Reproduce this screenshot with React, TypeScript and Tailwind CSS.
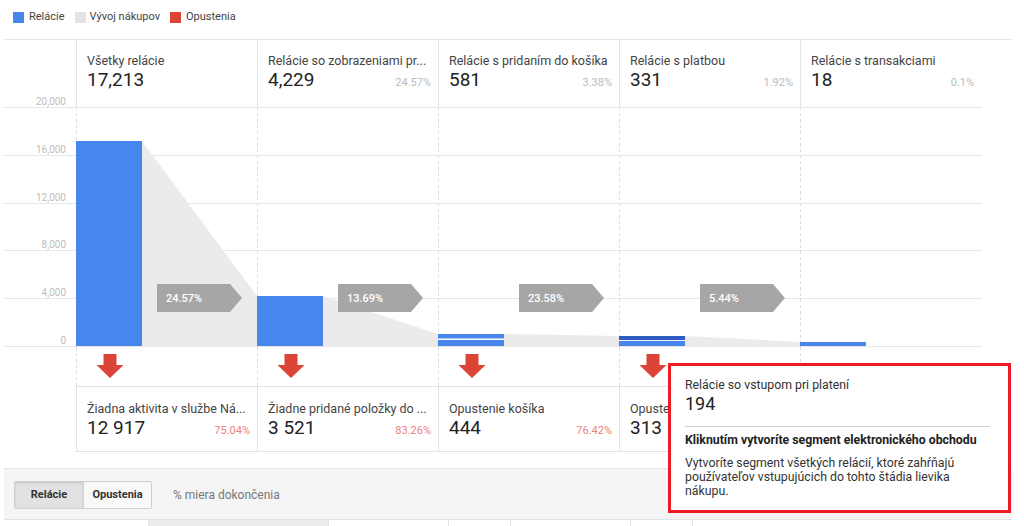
import React from "react";

const BLUE = "#4786ec";
const DARK_BLUE = "#2c5bc2";
const FUNNEL = "#ebebeb";
const TAG = "#a6a6a6";
const RED = "#db4437";

const COL = 181;
const AXIS = 72;
const ZERO = 239;

interface Stage {
  label: string;
  value: string;
  pct?: string;
}

const stages: Stage[] = [
  { label: "Všetky relácie", value: "17,213" },
  { label: "Relácie so zobrazeniami pr...", value: "4,229", pct: "24.57%" },
  { label: "Relácie s pridaním do košíka", value: "581", pct: "3.38%" },
  { label: "Relácie s platbou", value: "331", pct: "1.92%" },
  { label: "Relácie s transakciami", value: "18", pct: "0.1%" },
];

const drops = [
  { label: "Žiadna aktivita v službe Ná...", value: "12 917", pct: "75.04%" },
  { label: "Žiadne pridané položky do ...", value: "3 521", pct: "83.26%" },
  { label: "Opustenie košíka", value: "444", pct: "76.42%" },
  { label: "Opustenie platby", value: "313", pct: "" },
];

// bar segments in svg coords (top, height, colour)
const bars = [
  [{ y: 34, h: 205, c: BLUE }],
  [{ y: 189, h: 50, c: BLUE }],
  [
    { y: 227, h: 4.5, c: BLUE },
    { y: 233, h: 6, c: BLUE },
  ],
  [
    { y: 229, h: 4, c: DARK_BLUE },
    { y: 234, h: 5, c: BLUE },
  ],
  [{ y: 235, h: 4, c: BLUE }],
];

const tops = [34, 189, 227, 229, 235];
const rates = ["24.57%", "13.69%", "23.58%", "5.44%"];
const grid = [
  { y: 0.5, label: "20,000" },
  { y: 48.5, label: "16,000" },
  { y: 96.5, label: "12,000" },
  { y: 143.5, label: "8,000" },
  { y: 191.5, label: "4,000" },
  { y: 239.5, label: "0" },
];

const FunnelChart: React.FC = () => (
  <svg width={978} height={279} className="block overflow-visible">
    {[0, 1, 2, 3, 4].map((i) => (
      <line
        key={i}
        x1={AXIS + i * COL + 0.5}
        x2={AXIS + i * COL + 0.5}
        y1={0}
        y2={279}
        stroke="#dcdcdc"
        strokeDasharray="3 3"
      />
    ))}
    {grid.map((g) => (
      <g key={g.label}>
        <line x1={0} x2={978} y1={g.y} y2={g.y} stroke="#e6e6e6" />
        <text
          x={62}
          y={g.y - 3}
          textAnchor="end"
          fontSize={10}
          fill="#bdbdbd"
          fontFamily="Roboto, sans-serif"
        >
          {g.label}
        </text>
      </g>
    ))}
    {[0, 1, 2, 3].map((i) => {
      const x1 = AXIS + i * COL + 66;
      const x2 = AXIS + (i + 1) * COL;
      return (
        <polygon
          key={i}
          points={`${x1},${tops[i]} ${x2},${tops[i + 1]} ${x2},${ZERO} ${x1},${ZERO}`}
          fill={FUNNEL}
        />
      );
    })}
    {bars.map((segs, i) =>
      segs.map((s, j) => (
        <rect key={`${i}-${j}`} x={AXIS + i * COL} y={s.y} width={66} height={s.h} fill={s.c} />
      )),
    )}
    {rates.map((r, i) => {
      const x = AXIS + i * COL + 81;
      return (
        <g key={r}>
          <polygon
            points={`${x},177 ${x + 73},177 ${x + 85},191 ${x + 73},205 ${x},205`}
            fill={TAG}
          />
          <text
            x={x + 9}
            y={195}
            fontSize={11}
            fontWeight={500}
            fill="#fff"
            fontFamily="Roboto, sans-serif"
          >
            {r}
          </text>
        </g>
      );
    })}
    {[0, 1, 2, 3].map((i) => {
      const cx = AXIS + i * COL + 34;
      return (
        <polygon
          key={i}
          points={`${cx - 6.5},247 ${cx + 6.5},247 ${cx + 6.5},258 ${cx + 13.5},258 ${cx},271 ${cx - 13.5},258 ${cx - 6.5},258`}
          fill={RED}
        />
      );
    })}
  </svg>
);

export default function App() {
  return (
    <div
      className="relative w-[1024px] h-[526px] overflow-hidden bg-white text-[#333]"
      style={{ fontFamily: "Roboto, 'Liberation Sans', sans-serif" }}
    >
      {/* legend */}
      <div className="flex items-center h-[39px] pb-[5px] pl-[13px] text-[11px] text-[#444]">
        <span className="w-[11px] h-[11px] bg-[#4786ec] mr-[5px]" />
        <span className="mr-[10px]">Relácie</span>
        <span className="w-[11px] h-[11px] bg-[#e3e3e3] mr-[4px]" />
        <span className="mr-[10px]">Vývoj nákupov</span>
        <span className="w-[11px] h-[11px] bg-[#db4437] mr-[5px]" />
        <span>Opustenia</span>
      </div>

      <div className="ml-[4px] w-[1008px] border-t border-[#e6e6e6]">
        {/* stage headers */}
        <div className="grid grid-cols-[72px_repeat(5,181px)] h-[67px]">
          <div />
          {stages.map((s) => (
            <div key={s.label} className="border-l border-[#e6e6e6] pl-[10px] pr-[7px] pt-[13px]">
              <div className="text-[12.5px] leading-[16px] text-[#444] whitespace-nowrap">{s.label}</div>
              <div className="flex items-baseline justify-between">
                <span className="text-[19px] leading-[22px] text-[#222]">{s.value}</span>
                {s.pct && <span className="text-[11px] text-[#bbb]">{s.pct}</span>}
              </div>
            </div>
          ))}
        </div>

        <FunnelChart />

        {/* drop-off boxes */}
        <div className="grid grid-cols-[72px_repeat(4,181px)] h-[66px]">
          <div />
          {drops.map((d, i) => (
            <div
              key={d.label}
              className={`border-l border-t border-b border-[#e3e3e3] pl-[10px] pr-[7px] pt-[14px] ${
                i === 3 ? "border-r" : ""
              }`}
            >
              <div className="text-[12.5px] leading-[16px] text-[#444] whitespace-nowrap">{d.label}</div>
              <div className="flex items-baseline justify-between">
                <span className="text-[19px] leading-[22px] text-[#222]">{d.value}</span>
                <span className="text-[11px] text-[#e8837b]">{d.pct}</span>
              </div>
            </div>
          ))}
        </div>

        <div className="h-[16px]" />

        {/* bottom toolbar */}
        <div className="border-t border-[#e6e6e6] bg-[#f5f5f5] h-[51px] flex items-start pt-[12px] pl-[10px]">
          <div className="flex h-[28px] border border-[#d0d0d0] rounded-[2px] text-[11px] font-bold text-[#333]">
            <button className="w-[68px] bg-[#e2e2e2] shadow-[inset_0_1px_2px_rgba(0,0,0,0.12)]">Relácie</button>
            <button className="w-[68px] bg-[#f8f8f8] border-l border-[#d0d0d0]">Opustenia</button>
          </div>
          <span className="ml-[21px] mt-[5px] text-[12px] text-[#777]">% miera dokončenia</span>
        </div>
        <div className="grid grid-cols-[144px_180px_120px_62px_120px_62px_1fr] h-[20px] border-t border-[#e3e3e3]">
          <div />
          <div className="border-l border-[#e3e3e3] bg-[#ececec]" />
          <div className="border-l border-[#e3e3e3]" />
          <div className="border-l border-[#e3e3e3]" />
          <div className="border-l border-[#e3e3e3]" />
          <div className="border-l border-[#e3e3e3]" />
          <div className="border-l border-[#e3e3e3]" />
        </div>
      </div>

      {/* hover tooltip */}
      <div className="absolute left-[668px] top-[363px] w-[343px] h-[150px] border-[3px] border-[#ed1c24] bg-white pl-[14px] pr-[18px] pt-[12px] text-[#222]">
        <div className="text-[12.3px] leading-[14px] text-[#333]">Relácie so vstupom pri platení</div>
        <div className="mt-[2px] text-[18px] leading-[20px]">194</div>
        <div className="mt-[12px] border-t border-[#cfcfcf]" />
        <div className="mt-[6px] text-[12.3px] leading-[14px] font-bold">
          Kliknutím vytvoríte segment elektronického obchodu
        </div>
        <div className="mt-[9px] text-[12.3px] leading-[14px] text-[#333]">
          Vytvoríte segment všetkých relácií, ktoré zahŕňajú
          <br />
          používateľov vstupujúcich do tohto štádia lievika
          <br />
          nákupu.
        </div>
      </div>
    </div>
  );
}
